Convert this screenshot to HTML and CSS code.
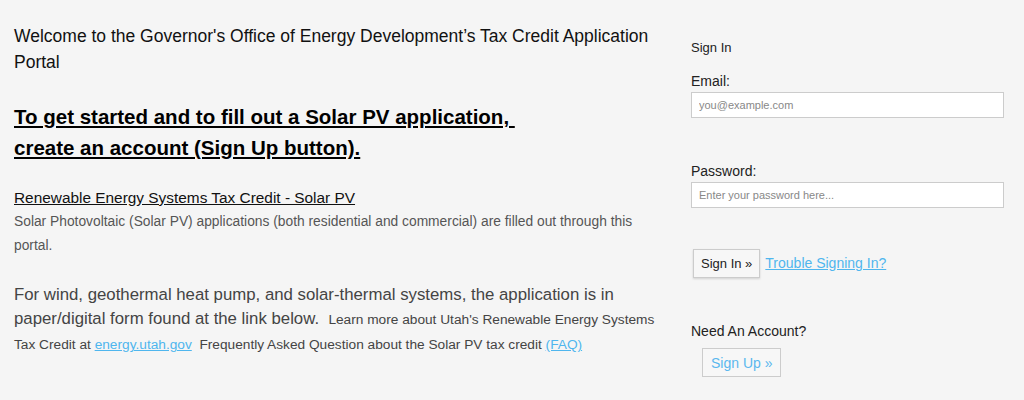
FILE: index.html
```html
<!DOCTYPE html>
<html>
<head>
    <link rel="stylesheet" href="styles.css">
</head>
<body>
    <div class="page">
        <div class="intro">
            <p class="welcome">Welcome to the Governor's Office of Energy Development’s Tax Credit Application Portal</p>

            <h2 class="get-started">To get started and to fill out a Solar PV application,&nbsp;<br>create an account (Sign Up button).</h2>

            <div class="solar">
                <div class="solar-title">Renewable Energy Systems Tax Credit - Solar PV</div>
                <p class="solar-text">Solar Photovoltaic (Solar PV) applications (both residential and commercial) are filled out through this portal.</p>
            </div>

            <p class="other">For wind, geothermal heat pump, and solar-thermal systems, the application is in paper/digital form found at the link below. &nbsp;<span class="small">Learn more about Utah's Renewable Energy Systems Tax Credit at <a href="#">energy.utah.gov</a> &nbsp;Frequently Asked Question about the Solar PV tax credit <a href="#">(FAQ)</a></span></p>
        </div>

        <div class="signin">
            <div class="signin-title">Sign In</div>

            <label class="field-label">Email:</label>
            <input class="field" type="text" placeholder="you@example.com">

            <label class="field-label password-label">Password:</label>
            <input class="field" type="password" placeholder="Enter your password here...">

            <div class="signin-actions">
                <button class="btn">Sign In »</button>
                <a href="#" class="trouble">Trouble Signing In?</a>
            </div>

            <div class="need">Need An Account?</div>
            <button class="btn signup">Sign Up »</button>
        </div>
    </div>
</body>
</html>
```

FILE: styles.css
```css
body {
    margin: 0;
    background: #f5f5f5;
    font-family: "Liberation Sans", Arial, sans-serif;
    color: #222;
}

.page {
    display: flex;
    padding: 0 20px 0 14px;
}

.intro {
    width: 645px;
    flex-shrink: 0;
}

.welcome {
    font-size: 17.5px;
    line-height: 26px;
    margin: 23px 0 0 0;
    color: #111;
}

.get-started {
    font-size: 20.5px;
    line-height: 31px;
    font-weight: bold;
    text-decoration: underline;
    margin: 26px 0 0 0;
    color: #000;
}

.solar {
    margin-top: 24px;
}

.solar-title {
    font-size: 15.4px;
    line-height: 22px;
    text-decoration: underline;
    color: #111;
}

.solar-text {
    font-size: 13.8px;
    line-height: 24px;
    color: #555;
    margin: 1px 0 0 0;
}

.other {
    font-size: 16.8px;
    line-height: 24px;
    color: #444;
    margin: 25px 0 0 0;
}

.other .small {
    font-size: 13.7px;
    color: #444;
}

a {
    color: #4fb6ee;
}

.signin {
    margin-left: 32px;
    width: 313px;
    padding-top: 40px;
}

.signin-title {
    font-size: 13px;
    color: #222;
    margin-bottom: 18px;
}

.field-label {
    display: block;
    font-size: 14px;
    color: #222;
    margin-bottom: 3px;
}

.password-label {
    margin-top: 45px;
}

.field {
    display: block;
    box-sizing: border-box;
    width: 313px;
    height: 26px;
    border: 1px solid #ccc;
    background: #fff;
    padding: 0 7px;
    font-family: "Liberation Sans", Arial, sans-serif;
    font-size: 11px;
}

.field::placeholder {
    color: #888;
}

.signin-actions {
    display: flex;
    align-items: center;
    margin-top: 41px;
    gap: 5px;
}

.btn {
    font-family: "Liberation Sans", Arial, sans-serif;
    font-size: 13px;
    color: #222;
    background: #f7f7f7;
    border: 1px solid #ccc;
    box-shadow: 0 1px 2px rgba(0, 0, 0, 0.15);
    padding: 0 7px;
    height: 29px;
    margin-left: 2px;
}

.trouble {
    font-size: 14px;
    margin-top: -2px;
}

.need {
    font-size: 14px;
    color: #222;
    margin-top: 45px;
}

.signup {
    margin-left: 11px;
    margin-top: 9px;
    color: #5bb8ee;
    font-size: 14px;
    padding: 0 8px;
    box-shadow: none;
    height: 29px;
}
```
